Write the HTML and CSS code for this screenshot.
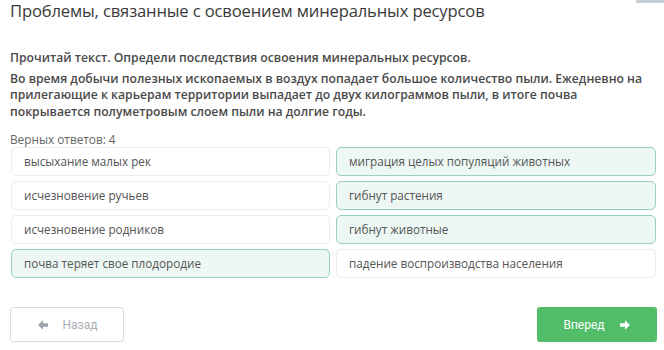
FILE: index.html
```html
<!DOCTYPE html>
<html lang="ru">
<head>
    <meta charset="UTF-8">
    <title>Проблемы, связанные с освоением минеральных ресурсов</title>
    <link rel="stylesheet" href="styles.css">
</head>
<body>
    <div class="corner"></div>
    <div class="page">
        <h1 class="title">Проблемы, связанные с освоением минеральных ресурсов</h1>

        <div class="task">
            <p class="task-head">Прочитай текст. Определи последствия освоения минеральных ресурсов.</p>
            <p class="task-text">Во время добычи полезных ископаемых в воздух попадает большое количество пыли. Ежедневно на прилегающие к карьерам территории выпадает до двух килограммов пыли, в итоге почва покрывается полуметровым слоем пыли на долгие годы.</p>
        </div>

        <div class="count">Верных ответов: 4</div>

        <div class="options">
            <div class="option">высыхание малых рек</div>
            <div class="option selected">миграция целых популяций животных</div>
            <div class="option">исчезновение ручьев</div>
            <div class="option selected">гибнут растения</div>
            <div class="option">исчезновение родников</div>
            <div class="option selected">гибнут животные</div>
            <div class="option selected">почва теряет свое плодородие</div>
            <div class="option">падение воспроизводства населения</div>
        </div>

        <div class="nav">
            <button class="btn btn-back">
                <svg width="12" height="12" viewBox="0 0 12 12"><path d="M1 6 L6 1.2 L6 4.2 L11 4.2 L11 7.8 L6 7.8 L6 10.8 Z" fill="#9aa3ad"/></svg>
                Назад
            </button>
            <button class="btn btn-next">
                Вперед
                <svg width="12" height="12" viewBox="0 0 12 12"><path d="M11 6 L6 1.2 L6 4.2 L1 4.2 L1 7.8 L6 7.8 L6 10.8 Z" fill="#fff"/></svg>
            </button>
        </div>
    </div>
</body>
</html>
```

FILE: styles.css
```css
* {
    margin: 0;
    padding: 0;
    box-sizing: border-box;
}

body {
    background: #fff;
    font-family: 'Open Sans', 'Noto Sans', sans-serif;
    color: #555;
    position: relative;
}

.corner {
    position: absolute;
    top: 0;
    right: 0;
    width: 28px;
    height: 3px;
    background: #c9cfd6;
}

.page {
    padding: 0 8px 0 10px;
}

.title {
    font-size: 16.6px;
    font-weight: 400;
    letter-spacing: -0.15px;
    color: #3a3a3a;
    line-height: 24px;
    margin-top: -1px;
}

.task {
    margin-top: 27px;
    font-weight: 600;
    color: #4a4a4a;
    font-size: 12.2px;
    line-height: 16.5px;
}

.task-head {
    margin-bottom: 4px;
}

.count {
    margin-top: 11px;
    font-size: 11.8px;
    color: #666;
    line-height: 16px;
}

.options {
    display: grid;
    grid-template-columns: 319px 320px;
    column-gap: 6px;
    row-gap: 5px;
    margin-top: 0;
    margin-left: 1px;
}

.option {
    height: 29px;
    border: 1px solid #ececec;
    border-radius: 5px;
    padding: 0 12px;
    font-size: 11.7px;
    line-height: 27px;
    color: #555;
    background: #fff;
}

.option.selected {
    background: #edf8f4;
    border-color: #98cfbe;
}

.nav {
    display: flex;
    justify-content: space-between;
    margin-top: 29px;
}

.btn {
    height: 35px;
    border-radius: 3px;
    font-family: 'Roboto', 'Open Sans', sans-serif;
    font-size: 12px;
    display: flex;
    align-items: center;
    justify-content: center;
    gap: 14px;
}

.btn-back {
    width: 114px;
    background: #fff;
    border: 1px solid #dcdcdc;
    color: #a8aeb5;
}

.btn-next {
    width: 120px;
    background: #52bd68;
    border: none;
    color: #fff;
    margin-right: -1px;
}
```
